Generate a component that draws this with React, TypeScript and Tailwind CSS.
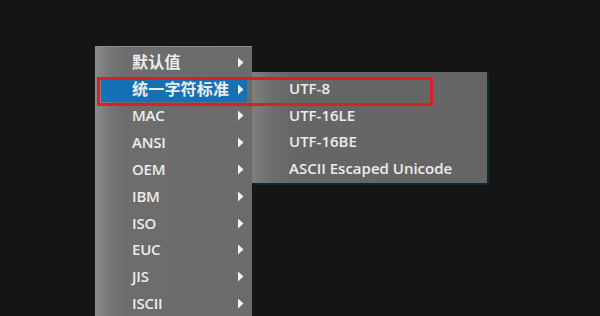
import React from "react";

const mainItems = [
  { t: "默认值", cjk: true },
  { t: "统一字符标准", cjk: true },
  { t: "MAC", cjk: false },
  { t: "ANSI", cjk: false },
  { t: "OEM", cjk: false },
  { t: "IBM", cjk: false },
  { t: "ISO", cjk: false },
  { t: "EUC", cjk: false },
  { t: "JIS", cjk: false },
  { t: "ISCII", cjk: false },
];
const subItems = ["UTF-8", "UTF-16LE", "UTF-16BE", "ASCII Escaped Unicode"];

function Arrow() {
  return (
    <svg width="7" height="11" viewBox="0 0 7 11" className="shrink-0">
      <path d="M1 0.5 L6.5 5.5 L1 10.5 Z" fill="#f2f2f2" />
    </svg>
  );
}

export default function App() {
  const font = { fontFamily: '"Open Sans", "Noto Sans CJK SC", sans-serif' };
  return (
    <div className="w-[600px] h-[316px] overflow-hidden bg-[#151515] relative" style={font}>
      <div className="ml-[95px] mt-[46px] w-[157px] relative">
        {/* main menu */}
        <div className="bg-[linear-gradient(to_right,#8a8a8a_0px,#767676_14px,#6d6d6d_30px,#6b6b6b_100%)] border-t border-l border-[#8c8c8c] pt-[2px] pb-[40px]">
          {mainItems.map((it, i) => (
            <div key={it.t} className="h-[26.8px] relative">
              {i === 1 ? (
                <div className="absolute left-[5px] right-[5px] top-[4px] h-[22px] bg-[#1670b4]" />
              ) : null}
              <div className="relative h-full flex items-center pl-[36px] pr-[8px]">
                <span
                  className={
                    it.cjk
                      ? "flex-1 text-[16px] font-semibold text-[#ececec] leading-none tracking-[0.2px]"
                      : "flex-1 text-[15px] font-semibold text-[#ececec] leading-none tracking-[-0.2px]"
                  }
                >
                  {it.t}
                </span>
                <Arrow />
              </div>
            </div>
          ))}
        </div>

        {/* submenu */}
        <div className="absolute left-full top-[26px] w-[235px] h-[111px] bg-[linear-gradient(to_right,#7e7e7e_0px,#6e6e6e_20px,#666666_40px,#656565_100%)] shadow-[2px_2px_0_#0e2a36] pt-[3px]">
          {subItems.map((t) => (
            <div key={t} className="h-[26.7px] flex items-center pl-[37px]">
              <span className="text-[15px] font-semibold text-[#ececec] leading-none tracking-[0px]">{t}</span>
            </div>
          ))}
        </div>

        {/* red highlight box */}
        <div className="absolute left-[2px] top-[31px] w-[336px] h-[29px] border-[3px] border-[#d8202c] pointer-events-none" />
      </div>
    </div>
  );
}
